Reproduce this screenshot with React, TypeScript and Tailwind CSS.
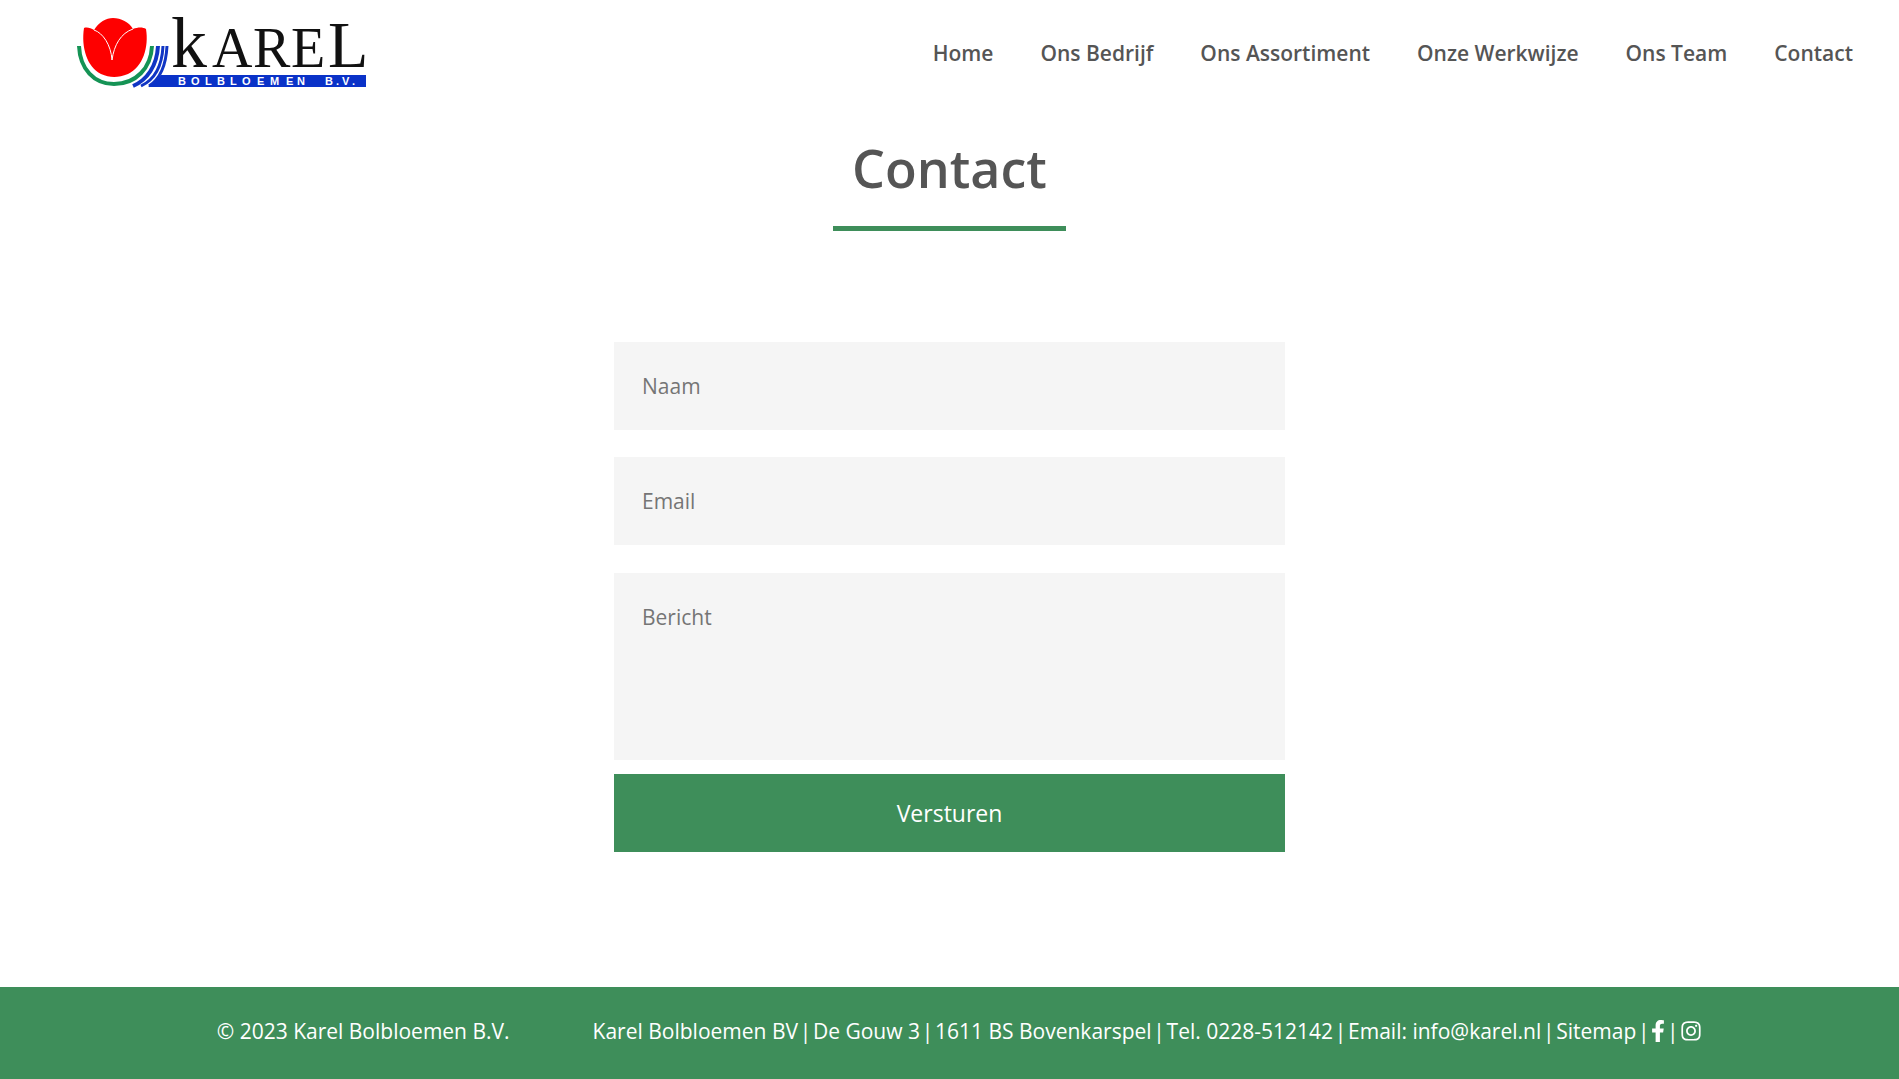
import { FaFacebookF, FaInstagram } from "react-icons/fa";

const navItems = [
  "Home",
  "Ons Bedrijf",
  "Ons Assortiment",
  "Onze Werkwijze",
  "Ons Team",
  "Contact",
];

const companyDetails = [
  "Karel Bolbloemen BV",
  "De Gouw 3",
  "1611 BS Bovenkarspel",
  "Tel. 0228-512142",
];

function Logo() {
  return (
    <svg
      viewBox="0 0 292 72"
      className="h-[72px] w-[292px] overflow-visible"
      role="img"
      aria-label="Karel Bolbloemen B.V."
    >
      {/* leaf arcs around the tulip */}
      <g fill="none">
        <path d="M3 29C4 52 18 67 38 67C60 67 75 51 76 29" stroke="#159355" strokeWidth="4" />
        <path d="M82 29C81 49 71 63 57 69" stroke="#1035c4" strokeWidth="4" />
        <path d="M87 29C86 50 78 63 65 69" stroke="#1035c4" strokeWidth="3" />
        <path d="M91 29C90 49 84 62 73 69" stroke="#1035c4" strokeWidth="3" />
      </g>
      <path d="M72 70C78 66 82 62 85 58H290V70Z" fill="#0a32c8" />
      {/* tulip */}
      <path
        d="M18 13C23 5 30 1 37 1C45 1 53 5 57 12C62 10 67 10 70 12C73 30 67 50 52 57C42 61 34 61 25 57C11 50 5 30 8 11C11 10 15 11 18 13Z"
        fill="#fe0000"
      />
      <path d="M18 13C27 16 35 28 36 43C38 28 45 16 57 12" fill="none" stroke="#ffffff" strokeWidth="1" />
      <g fontFamily="'Liberation Serif', serif" fill="#111111">
        <text x="95" y="50" fontSize="72">
          k
        </text>
        <text y="50" fontSize="56" x="136 177 215">
          ARE
        </text>
        <text x="252" y="50" fontSize="66">
          L
        </text>
      </g>
      <g fontFamily="'Liberation Sans', sans-serif" fontSize="11" fontWeight="700" fill="#ffffff">
        <text y="68" x="102 115 129 141 154 166 181 194 210 221">
          BOLBLOEMEN
        </text>
        <text y="68" x="249 260 266 276">
          B.V.
        </text>
      </g>
    </svg>
  );
}

function Divider() {
  return <span className="flex w-[5px] justify-center">|</span>;
}

const field =
  "block w-full bg-[#f5f5f5] px-7 py-7 text-[21px] leading-8 text-[#555555] outline-none placeholder:text-[#757575] placeholder:opacity-100";

export default function App() {
  return (
    <div className="flex min-h-screen flex-col bg-white font-['Open_Sans','Noto_Sans',sans-serif] text-[#555555]">
      <header className="flex items-center justify-between pt-[17px] pr-[46px] pl-[76px]">
        <a href="#home">
          <Logo />
        </a>
        <nav className="flex gap-[47px] text-[21px] leading-8 font-semibold">
          {navItems.map((item) => (
            <a key={item} href="#page">
              {item}
            </a>
          ))}
        </nav>
      </header>

      <main className="flex flex-1 flex-col items-center">
        <h1 className="mt-[41px] text-[52px] leading-[76px] font-semibold">Contact</h1>
        <div className="mt-5 h-[5px] w-[233px] bg-[#3e8e5a]" />

        <form className="mt-[111px] flex w-full max-w-[671px] flex-col">
          <input className={field} type="text" placeholder="Naam" aria-label="Naam" />
          <input className={`${field} mt-[27px]`} type="email" placeholder="Email" aria-label="Email" />
          <textarea
            className={`${field} mt-7 h-[187px] resize-none`}
            placeholder="Bericht"
            aria-label="Bericht"
          />
          <button
            type="submit"
            className="mt-[14px] bg-[#3e8e5a] py-[23px] text-[23px] leading-8 text-white"
          >
            Versturen
          </button>
        </form>
      </main>

      <footer className="flex justify-center gap-[83px] bg-[#3e8e5a] pt-7 pb-8 pl-5 text-[21px] leading-8 whitespace-nowrap text-white">
        <p>© 2023 Karel Bolbloemen B.V.</p>
        <div className="flex items-center gap-[5px]">
          {companyDetails.map((detail) => (
            <div key={detail} className="flex gap-[5px]">
              <span>{detail}</span>
              <Divider />
            </div>
          ))}
          <span>
            Email: <a href="mailto:info@karel.nl">info@karel.nl</a>
          </span>
          <Divider />
          <a href="#sitemap">Sitemap</a>
          <Divider />
          <a href="#facebook" aria-label="Facebook">
            <FaFacebookF className="h-[22px] w-[14px]" />
          </a>
          <Divider />
          <a href="#instagram" aria-label="Instagram">
            <FaInstagram className="size-[22px]" />
          </a>
        </div>
      </footer>
    </div>
  );
}
